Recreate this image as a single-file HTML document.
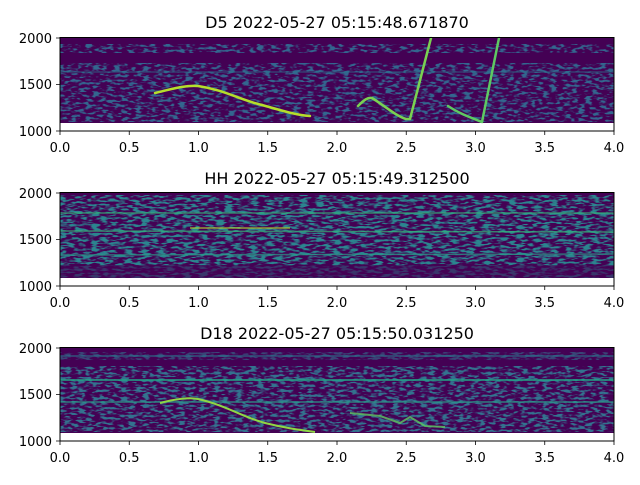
<!DOCTYPE html>
<html><head><meta charset="utf-8"><style>
html,body{margin:0;padding:0;background:#fff;}
svg text{font-family:"DejaVu Sans","Liberation Sans",sans-serif;fill:#000;}
filter{color-interpolation-filters:sRGB;}
</style></head><body>
<svg width="640" height="480" viewBox="0 0 640 480" xmlns="http://www.w3.org/2000/svg">
<defs>
<filter id="m1" x="0" y="0" width="100%" height="100%" color-interpolation-filters="sRGB">
<feTurbulence type="fractalNoise" baseFrequency="0.14 0.4" numOctaves="2" seed="3" result="t"/>
<feColorMatrix in="t" type="matrix" values="0 0 0 0 0.2  0 0 0 0 0.4  0 0 0 0 0.56  6 0 0 0 -2.9"/>
</filter>
<filter id="m2" x="0" y="0" width="100%" height="100%" color-interpolation-filters="sRGB">
<feTurbulence type="fractalNoise" baseFrequency="0.12 0.45" numOctaves="2" seed="8" result="t"/>
<feColorMatrix in="t" type="matrix" values="0 0 0 0 0.17  0 0 0 0 0.52  0 0 0 0 0.56  6 0 0 0 -2.7"/>
</filter>
<filter id="m3" x="0" y="0" width="100%" height="100%" color-interpolation-filters="sRGB">
<feTurbulence type="fractalNoise" baseFrequency="0.14 0.4" numOctaves="2" seed="15" result="t"/>
<feColorMatrix in="t" type="matrix" values="0 0 0 0 0.2  0 0 0 0 0.45  0 0 0 0 0.56  6 0 0 0 -2.8"/>
</filter>
</defs>

<!-- Panel 1 -->
<text x="337" y="28" font-size="16" text-anchor="middle">D5 2022-05-27 05:15:48.671870</text>
<rect x="60" y="38" width="554" height="85" fill="#440154"/>
<rect x="60" y="44" width="554" height="9" fill="#fff" filter="url(#m1)"/>
<rect x="60" y="63" width="554" height="59" fill="#fff" filter="url(#m1)"/>
<line x1="60" y1="72" x2="614" y2="72" stroke="#2a788e" stroke-width="1.5" opacity="0.5"/>
<g fill="none" stroke-linecap="round" stroke-linejoin="round">
<path d="M155,93 C172,89 185,85 198,86 C225,90 240,100 262,105 C280,110 295,115 310,116" stroke="#b5de2b" stroke-width="2.5"/>
<path d="M358,106 C364,100 368,97 372,98 C385,106 396,116 406,119 L410,119 L431,38" stroke="#7ad151" stroke-width="2.5"/>
<path d="M448,106 C460,114 472,118 482,122 L499,38" stroke="#5ec962" stroke-width="2.5"/>
</g>
<rect x="60" y="37.5" width="554" height="93.5" fill="none" stroke="#000" stroke-width="1"/>

<!-- Panel 2 -->
<text x="337" y="184" font-size="16" text-anchor="middle">HH 2022-05-27 05:15:49.312500</text>
<rect x="60" y="193" width="554" height="85" fill="#440154"/>
<rect x="60" y="195" width="554" height="70" fill="#fff" filter="url(#m2)"/>
<rect x="60" y="265" width="554" height="13" fill="#fff" filter="url(#m2)" opacity="0.4"/>
<g stroke-width="1.5" opacity="0.7">
<line x1="60" y1="213" x2="614" y2="213" stroke="#35b779"/>
<line x1="60" y1="231" x2="614" y2="232" stroke="#35b779"/>
<line x1="190" y1="228" x2="290" y2="228" stroke="#b5de2b"/>
<line x1="60" y1="255" x2="614" y2="254" stroke="#2a9e8a"/>
</g>
<rect x="60" y="192.5" width="554" height="93.5" fill="none" stroke="#000" stroke-width="1"/>

<!-- Panel 3 -->
<text x="337" y="339" font-size="16" text-anchor="middle">D18 2022-05-27 05:15:50.031250</text>
<rect x="60" y="348" width="554" height="85" fill="#440154"/>
<rect x="60" y="352" width="554" height="8" fill="#fff" filter="url(#m3)" opacity="0.6"/>
<rect x="60" y="366" width="554" height="66" fill="#fff" filter="url(#m3)"/>
<g stroke-width="1.5">
<line x1="60" y1="356" x2="614" y2="356" stroke="#2a788e" opacity="0.7"/>
<line x1="60" y1="380" x2="614" y2="380" stroke="#21a585"/>
<line x1="60" y1="402" x2="614" y2="402" stroke="#2a9e8a" opacity="0.8"/>
</g>
<path d="M160,403 C175,399 190,397 198,399 C225,405 245,418 265,423 C285,428 300,430 315,432" fill="none" stroke="#8fd744" stroke-width="2"/>
<path d="M350,413 L380,416 L400,423 L410,417 L425,426 L445,427" fill="none" stroke="#5ec962" stroke-width="2" opacity="0.8"/>
<rect x="60" y="347.5" width="554" height="93.5" fill="none" stroke="#000" stroke-width="1"/>

<!-- ticks and labels -->
<g stroke="#000" stroke-width="0.8">
<path d="M60,38h-4M60,84.5h-4M60,131h-4 M60,193h-4M60,239.5h-4M60,286h-4 M60,348h-4M60,394.5h-4M60,441h-4"/>
<path d="M60,131v4M129.25,131v4M198.5,131v4M267.75,131v4M337,131v4M406.25,131v4M475.5,131v4M544.75,131v4M614,131v4"/>
<path d="M60,286v4M129.25,286v4M198.5,286v4M267.75,286v4M337,286v4M406.25,286v4M475.5,286v4M544.75,286v4M614,286v4"/>
<path d="M60,441v4M129.25,441v4M198.5,441v4M267.75,441v4M337,441v4M406.25,441v4M475.5,441v4M544.75,441v4M614,441v4"/>
</g>
<g font-size="13" text-anchor="end">
<text x="52" y="43">2000</text><text x="52" y="89">1500</text><text x="52" y="136">1000</text>
<text x="52" y="198">2000</text><text x="52" y="244">1500</text><text x="52" y="291">1000</text>
<text x="52" y="353">2000</text><text x="52" y="399">1500</text><text x="52" y="446">1000</text>
</g>
<g font-size="13" text-anchor="middle">
<text x="60" y="152">0.0</text><text x="129.25" y="152">0.5</text><text x="198.5" y="152">1.0</text><text x="267.75" y="152">1.5</text><text x="337" y="152">2.0</text><text x="406.25" y="152">2.5</text><text x="475.5" y="152">3.0</text><text x="544.75" y="152">3.5</text><text x="614" y="152">4.0</text>
<text x="60" y="307">0.0</text><text x="129.25" y="307">0.5</text><text x="198.5" y="307">1.0</text><text x="267.75" y="307">1.5</text><text x="337" y="307">2.0</text><text x="406.25" y="307">2.5</text><text x="475.5" y="307">3.0</text><text x="544.75" y="307">3.5</text><text x="614" y="307">4.0</text>
<text x="60" y="462">0.0</text><text x="129.25" y="462">0.5</text><text x="198.5" y="462">1.0</text><text x="267.75" y="462">1.5</text><text x="337" y="462">2.0</text><text x="406.25" y="462">2.5</text><text x="475.5" y="462">3.0</text><text x="544.75" y="462">3.5</text><text x="614" y="462">4.0</text>
</g>
</svg>
</body></html>
